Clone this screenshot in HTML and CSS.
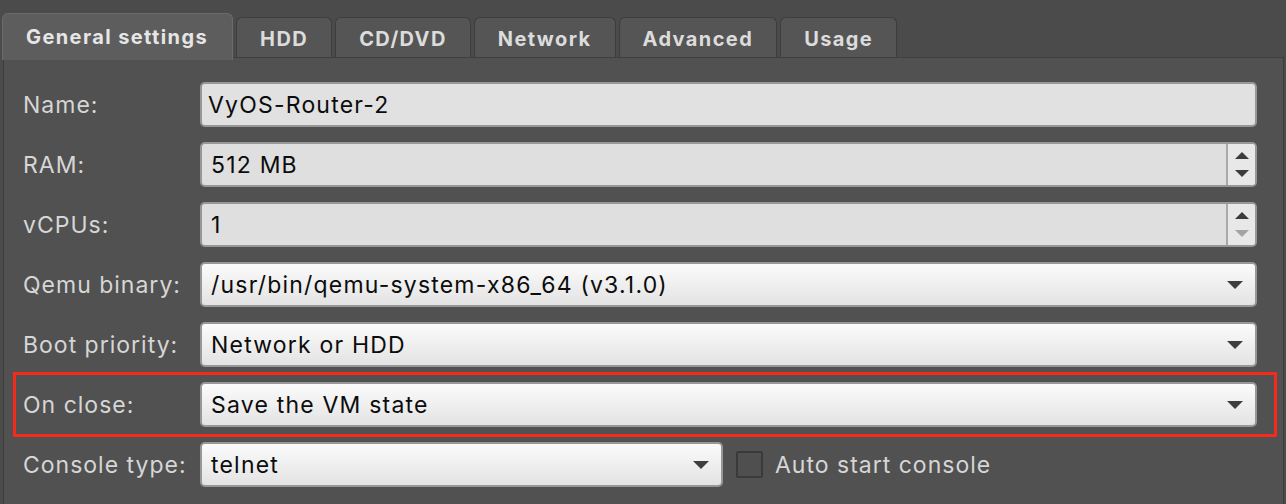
FILE: index.html
```html
<!DOCTYPE html>
<html>
<head>
<meta charset="utf-8">
<link rel="stylesheet" href="styles.css">
</head>
<body>
<div class="dialog">
  <div class="tabs">
    <div class="tab active">General settings</div>
    <div class="tab">HDD</div>
    <div class="tab">CD/DVD</div>
    <div class="tab">Network</div>
    <div class="tab">Advanced</div>
    <div class="tab">Usage</div>
  </div>
  <div class="panel">
    <div class="row">
      <div class="label">Name:</div>
      <div class="field text">VyOS-Router-2</div>
    </div>
    <div class="row">
      <div class="label">RAM:</div>
      <div class="field spin">
        <span class="value">512 MB</span>
        <span class="spin-btns">
          <svg width="16" height="34" viewBox="0 0 16 34"><path d="M1 11 L8 4 L15 11 Z" fill="#3c3c3c"/><path d="M1 22 L8 29 L15 22 Z" fill="#3c3c3c"/></svg>
        </span>
      </div>
    </div>
    <div class="row">
      <div class="label">vCPUs:</div>
      <div class="field spin">
        <span class="value">1</span>
        <span class="spin-btns">
          <svg width="16" height="34" viewBox="0 0 16 34"><path d="M1 11 L8 4 L15 11 Z" fill="#3c3c3c"/><path d="M1 22 L8 29 L15 22 Z" fill="#a3a3a3"/></svg>
        </span>
      </div>
    </div>
    <div class="row">
      <div class="label">Qemu binary:</div>
      <div class="field combo">
        <span class="value">/usr/bin/qemu-system-x86_64 (v3.1.0)</span>
        <svg class="arrow" width="16" height="8" viewBox="0 0 16 8"><path d="M0 0 H16 L8 8 Z" fill="#3e3e3e"/></svg>
      </div>
    </div>
    <div class="row">
      <div class="label">Boot priority:</div>
      <div class="field combo">
        <span class="value">Network or HDD</span>
        <svg class="arrow" width="16" height="8" viewBox="0 0 16 8"><path d="M0 0 H16 L8 8 Z" fill="#3e3e3e"/></svg>
      </div>
    </div>
    <div class="row highlighted">
      <div class="label">On close:</div>
      <div class="field combo">
        <span class="value">Save the VM state</span>
        <svg class="arrow" width="16" height="8" viewBox="0 0 16 8"><path d="M0 0 H16 L8 8 Z" fill="#3e3e3e"/></svg>
      </div>
      <div class="highlight-box"></div>
    </div>
    <div class="row">
      <div class="label">Console type:</div>
      <div class="field combo short">
        <span class="value">telnet</span>
        <svg class="arrow" width="16" height="8" viewBox="0 0 16 8"><path d="M0 0 H16 L8 8 Z" fill="#3e3e3e"/></svg>
      </div>
      <div class="check">
        <span class="box"></span>
        <span class="check-label">Auto start console</span>
      </div>
    </div>
  </div>
</div>
</body>
</html>
```

FILE: styles.css
```css
html, body {
  margin: 0;
  padding: 0;
  background: #4b4b4b;
  height: 504px;
  overflow: hidden;
}

body {
  font-family: Inter, "Liberation Sans", sans-serif;
}

.dialog {
  padding-top: 13px;
}

.tabs {
  display: flex;
  align-items: flex-end;
  gap: 3px;
  padding-left: 2px;
  height: 47px;
  position: relative;
  z-index: 1;
}

.tab {
  box-sizing: border-box;
  height: 40px;
  padding: 3px 23px 0 23px;
  margin-bottom: 3px;
  display: flex;
  align-items: center;
  justify-content: center;
  font-weight: 700;
  font-size: 20px;
  letter-spacing: 1.4px;
  color: #dcdcdc;
  background: #555555;
  border: 1px solid #3d3d3d;
  border-bottom: none;
  border-radius: 6px 6px 0 0;
}

.tab.active {
  height: 47px;
  margin-bottom: 0;
  padding: 0 24px 1px 23px;
  background: #5d5d5d;
  border-color: #6b6b6b;
  color: #e6e6e6;
}

.panel {
  margin: -3px 2px 0 3px;
  background: #515151;
  border-top: 1px solid #3f3f3f;
  border-left: 1px solid #3c3c3c;
  border-right: 1px solid #3c3c3c;
  padding: 24px 26px 20px 19px;
  display: flex;
  flex-direction: column;
  gap: 15px;
  height: 420px;
}

.row {
  display: flex;
  align-items: center;
  height: 45px;
  position: relative;
}

.label {
  width: 177px;
  flex: none;
  font-size: 23px;
  letter-spacing: 1px;
  color: #d6d6d6;
}

.field {
  box-sizing: border-box;
  height: 45px;
  flex: 1;
  border: 2px solid #979797;
  border-radius: 5px;
  font-size: 23px;
  letter-spacing: 1.2px;
  color: #0c0c0c;
  display: flex;
  align-items: center;
}

.field.text {
  background: #e1e1e1;
  padding-left: 6px;
}

.field.spin {
  background: #dfdfdf;
  padding-left: 9px;
}

.field.spin .value {
  flex: 1;
}

.spin-btns {
  box-sizing: border-box;
  width: 29px;
  height: 100%;
  border-left: 2px solid #a9a9a9;
  display: flex;
  align-items: center;
  justify-content: center;
  background: #e8e8e8;
  border-radius: 0 3px 3px 0;
}

.field.combo {
  background: linear-gradient(#fbfbfb, #e3e3e3);
  padding: 0 12px 0 9px;
}

.field.combo .value {
  flex: 1;
}

.field.combo.short {
  flex: none;
  width: 523px;
}

.highlight-box {
  position: absolute;
  left: -10px;
  right: -20px;
  top: -10px;
  bottom: -10px;
  border: 3px solid #f7291b;
  pointer-events: none;
}

.check {
  display: flex;
  align-items: center;
  margin-left: 13px;
  gap: 12px;
}

.check .box {
  box-sizing: border-box;
  width: 27px;
  height: 27px;
  border: 2px solid #3a3a3a;
  border-radius: 2px;
  background: #4f4f4f;
}

.check-label {
  font-size: 23px;
  letter-spacing: 1px;
  color: #d6d6d6;
}
```
